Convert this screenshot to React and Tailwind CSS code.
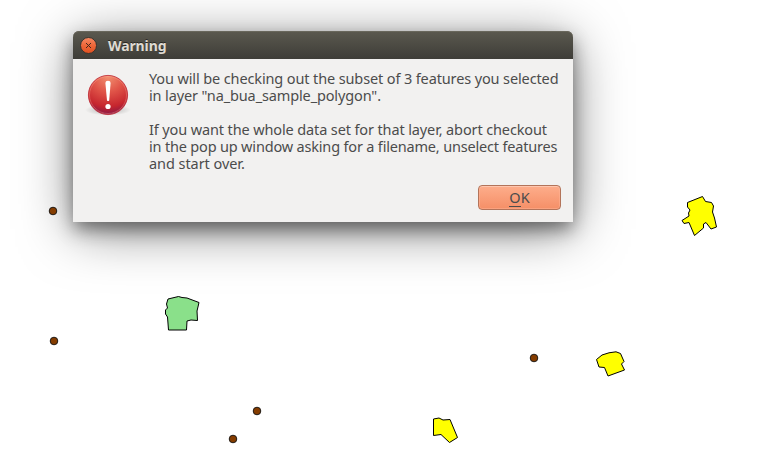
const POINTS = [
  [53, 211],
  [54, 341],
  [534, 358],
  [257, 411],
  [233, 439],
];

const SHAPES = [
  { fill: '#8ae08a', points: '168,299 178.5,296.5 182,297.5 187,298 199,302.5 197,311 197.5,320.5 191,320 187,321 186.5,330 168.5,330 167.5,317 165.5,314 165.5,310 167.5,308 166.5,304' },
  { fill: '#ffff00', points: '687.5,202.5 702.5,196.5 705.5,201.5 711.5,202.5 713.5,206 712.5,212 714.5,218 716.5,227 711,229 706,222.5 703.5,224 703.5,228 694.5,235.5 689,222.5 684,223.5 682,220.5 689,216 688.5,213 690,210 687.5,207' },
  { fill: '#ffff00', points: '596.5,359.5 602,355 609,352.8 616,351.8 620.5,353.5 624,361.5 621.5,364 624.5,370 608,376 604.5,367.5 599,367' },
  { fill: '#ffff00', points: '433.5,419 439,418 443,420 450,419.5 457.5,437.5 449.5,442.5 441,434.5 433.5,435.5' },
];

function MapCanvas() {
  return (
    <svg className="absolute inset-0" width="763" height="469" viewBox="0 0 763 469">
      {SHAPES.map((s, i) => (
        <polygon key={i} points={s.points} fill={s.fill} stroke="#000" strokeWidth="1" strokeLinejoin="round" />
      ))}
    </svg>
  );
}

function PointMarkers() {
  return (
    <svg className="pointer-events-none absolute inset-0" width="763" height="469" viewBox="0 0 763 469">
      {POINTS.map(([x, y]) => (
        <circle key={`${x}-${y}`} cx={x} cy={y} r="3.8" fill="#843c00" stroke="#111" strokeWidth="0.9" />
      ))}
    </svg>
  );
}

function CloseButton() {
  return (
    <button className="block h-[18px] w-[18px]" aria-label="Close">
      <svg width="18" height="18" viewBox="0 0 18 18">
        <defs>
          <linearGradient id="close" x1="0" y1="0" x2="0" y2="1">
            <stop offset="0" stopColor="#f58a64" />
            <stop offset="0.5" stopColor="#ee6739" />
            <stop offset="1" stopColor="#e05020" />
          </linearGradient>
        </defs>
        <circle cx="8.5" cy="8.5" r="8" fill="url(#close)" stroke="#35332e" strokeWidth="1" />
        <path d="M6 6L11 11M11 6L6 11" stroke="#41281d" strokeWidth="1" />
      </svg>
    </button>
  );
}

function AlertIcon() {
  return (
    <svg className="block" width="48" height="48" viewBox="0 0 48 48">
      <defs>
        <radialGradient id="ball" cx="0.5" cy="0.02" r="1.02">
          <stop offset="0" stopColor="#f29070" />
          <stop offset="0.4" stopColor="#e05448" />
          <stop offset="0.76" stopColor="#c6262e" />
          <stop offset="1" stopColor="#7e1449" />
        </radialGradient>
        <radialGradient id="ground">
          <stop offset="0" stopColor="#000" stopOpacity="0.28" />
          <stop offset="1" stopColor="#000" stopOpacity="0" />
        </radialGradient>
      </defs>
      <ellipse cx="24" cy="39" rx="23" ry="5.5" fill="url(#ground)" />
      <circle cx="24" cy="24" r="19.6" fill="url(#ball)" stroke="#bd2530" strokeWidth="0.8" />
      <circle cx="24" cy="24" r="18.5" fill="none" stroke="#ffb0a0" strokeOpacity="0.4" strokeWidth="0.8" />
      <path d="M21.4 12Q21.4 9.800 24 9.800Q26.6 9.800 26.600 12L25.200 29.5Q24.1 30.6 23 29.5Z" fill="#fff" />
      <circle cx="24" cy="35.5" r="2.600" fill="#fff" />
    </svg>
  );
}

const LINES = [
  ['You will be checking out the subset of 3 features you selected', 'tracking-[-0.125px]'],
  ['in layer "na_bua_sample_polygon".', 'tracking-[-0.13px]'],
  ['\u00a0', 'tracking-normal'],
  ['If you want the whole data set for that layer, abort checkout', 'tracking-[-0.125px]'],
  ['in the pop up window asking for a filename, unselect features', 'tracking-[-0.18px]'],
  ['and start over.', 'tracking-[-0.06px]'],
];

function WarningDialog() {
  return (
    <section className="absolute left-[73px] top-[31px] flex h-[191px] w-[500px] flex-col rounded-t-[6px] bg-[#f2f1f0] shadow-[0_8px_18px_-1px_rgba(0,0,0,0.45),0_9px_54px_-2px_rgba(0,0,0,0.52)]">
      <header className="flex h-7 shrink-0 items-center gap-[10px] rounded-t-[6px] bg-linear-to-b from-[#5b594f] to-[#3e3d38] pl-[7px] pt-px shadow-[inset_0_1px_0_#69675c]">
        <CloseButton />
        <h1 className="text-[14px] font-bold leading-none tracking-[-0.1px] text-[#dfdbd2] [text-shadow:0_-1px_0_rgba(0,0,0,0.5)]">Warning</h1>
      </header>
      <div className="flex pl-[11px] pt-3">
        <AlertIcon />
        <div className="-mt-px ml-[17px] text-[14.5px] leading-[17px] text-[#4c4c4c]">
          {LINES.map(([text, tracking], i) => (
            <p key={i} className={`whitespace-nowrap ${tracking}`}>{text}</p>
          ))}
        </div>
      </div>
      <footer className="mt-auto flex justify-end pb-3 pr-3">
        <button className="flex h-[25px] w-[83px] items-center justify-center rounded-[4px] border border-[#b3745a] bg-linear-to-b from-[#fdad8b] to-[#f58f67] text-[14.5px] leading-[17px] text-[#4c4c4c] shadow-[inset_0_1px_0_#ffc6ae,inset_0_0_0_1px_rgba(255,180,150,0.5)]">
          <span className="h-[17px] shadow-[0_1px_0_#4c4c4c]">O</span>K
        </button>
      </footer>
    </section>
  );
}

export default function App() {
  return (
    <main className="relative h-[469px] w-[763px] overflow-hidden bg-white font-['Noto_Sans','Open_Sans',sans-serif]">
      <MapCanvas />
      <WarningDialog />
      <PointMarkers />
    </main>
  );
}
